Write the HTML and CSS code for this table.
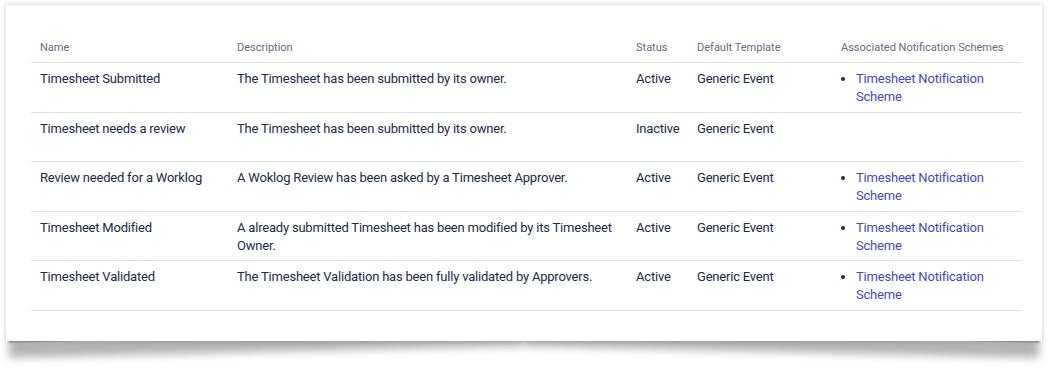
FILE: index.html
```html
<!DOCTYPE html>
<html>
<head>
<meta charset="utf-8">
<link rel="stylesheet" href="styles.css">
</head>
<body>
<div class="card">
  <table class="events">
    <colgroup>
      <col class="c-name"><col class="c-desc"><col class="c-status"><col class="c-tpl"><col class="c-schemes">
    </colgroup>
    <thead>
      <tr><th>Name</th><th>Description</th><th>Status</th><th>Default Template</th><th>Associated Notification Schemes</th></tr>
    </thead>
    <tbody>
      <tr>
        <td>Timesheet Submitted</td>
        <td>The Timesheet has been submitted by its owner.</td>
        <td>Active</td>
        <td>Generic Event</td>
        <td><ul class="schemes"><li><a href="#">Timesheet Notification Scheme</a></li></ul></td>
      </tr>
      <tr>
        <td>Timesheet needs a review</td>
        <td>The Timesheet has been submitted by its owner.</td>
        <td>Inactive</td>
        <td>Generic Event</td>
        <td></td>
      </tr>
      <tr>
        <td>Review needed for a Worklog</td>
        <td>A Woklog Review has been asked by a Timesheet Approver.</td>
        <td>Active</td>
        <td>Generic Event</td>
        <td><ul class="schemes"><li><a href="#">Timesheet Notification Scheme</a></li></ul></td>
      </tr>
      <tr>
        <td>Timesheet Modified</td>
        <td>A already submitted Timesheet has been modified by its Timesheet Owner.</td>
        <td>Active</td>
        <td>Generic Event</td>
        <td><ul class="schemes"><li><a href="#">Timesheet Notification Scheme</a></li></ul></td>
      </tr>
      <tr>
        <td>Timesheet Validated</td>
        <td>The Timesheet Validation has been fully validated by Approvers.</td>
        <td>Active</td>
        <td>Generic Event</td>
        <td><ul class="schemes"><li><a href="#">Timesheet Notification Scheme</a></li></ul></td>
      </tr>
    </tbody>
  </table>
</div>
</body>
</html>
```
FILE: styles.css
```css
html {
  margin: 0;
  padding: 0;
  background: #ffffff;
}
body {
  margin: 0;
  min-height: 370px;
  box-sizing: border-box;
  padding: 5px 14px 29px 6px;
  font-family: "Roboto", "Lato", sans-serif;
  color: #172b4d;
}
.card {
  position: relative;
  width: 1036px;
  height: 336px;
  box-sizing: border-box;
  background: #fff;
  padding: 35px 20px 0 25px;
  box-shadow: 0 0 5px rgba(0,0,0,0.22);
}
.card::before,
.card::after {
  content: "";
  position: absolute;
  z-index: -1;
  bottom: 10px;
  width: calc(50% - 4px);
  height: 20px;
  background: #999;
  box-shadow: 0 15px 9px rgba(0,0,0,0.3);
}
.card::before {
  left: 3px;
  transform: rotate(-1.3deg);
  transform-origin: right bottom;
}
.card::after {
  right: 3px;
  transform: rotate(1.3deg);
  transform-origin: left bottom;
}
.events {
  width: 991px;
  border-collapse: collapse;
  table-layout: fixed;
  font-size: 13px;
  letter-spacing: -0.2px;
}
.c-name { width: 197px; }
.c-desc { width: 399px; }
.c-status { width: 61px; }
.c-tpl { width: 144px; }
.c-schemes { width: 190px; }
.events th {
  text-align: left;
  font-weight: 400;
  font-size: 11px;
  letter-spacing: 0;
  color: #5e6c84;
  padding: 0 9px 6px;
  line-height: 16px;
  white-space: nowrap;
  border-bottom: 1px solid #dfe1e6;
}
.events td {
  vertical-align: top;
  padding: 7px 9px 0;
  height: 41.6px;
  line-height: 18px;
  border-bottom: 1px solid #dfe1e6;
}
.schemes {
  margin: 0;
  padding-left: 15px;
}
.schemes li::marker {
  color: #172b4d;
}
.schemes a {
  color: #3c48d4;
  text-decoration: none;
}
```
